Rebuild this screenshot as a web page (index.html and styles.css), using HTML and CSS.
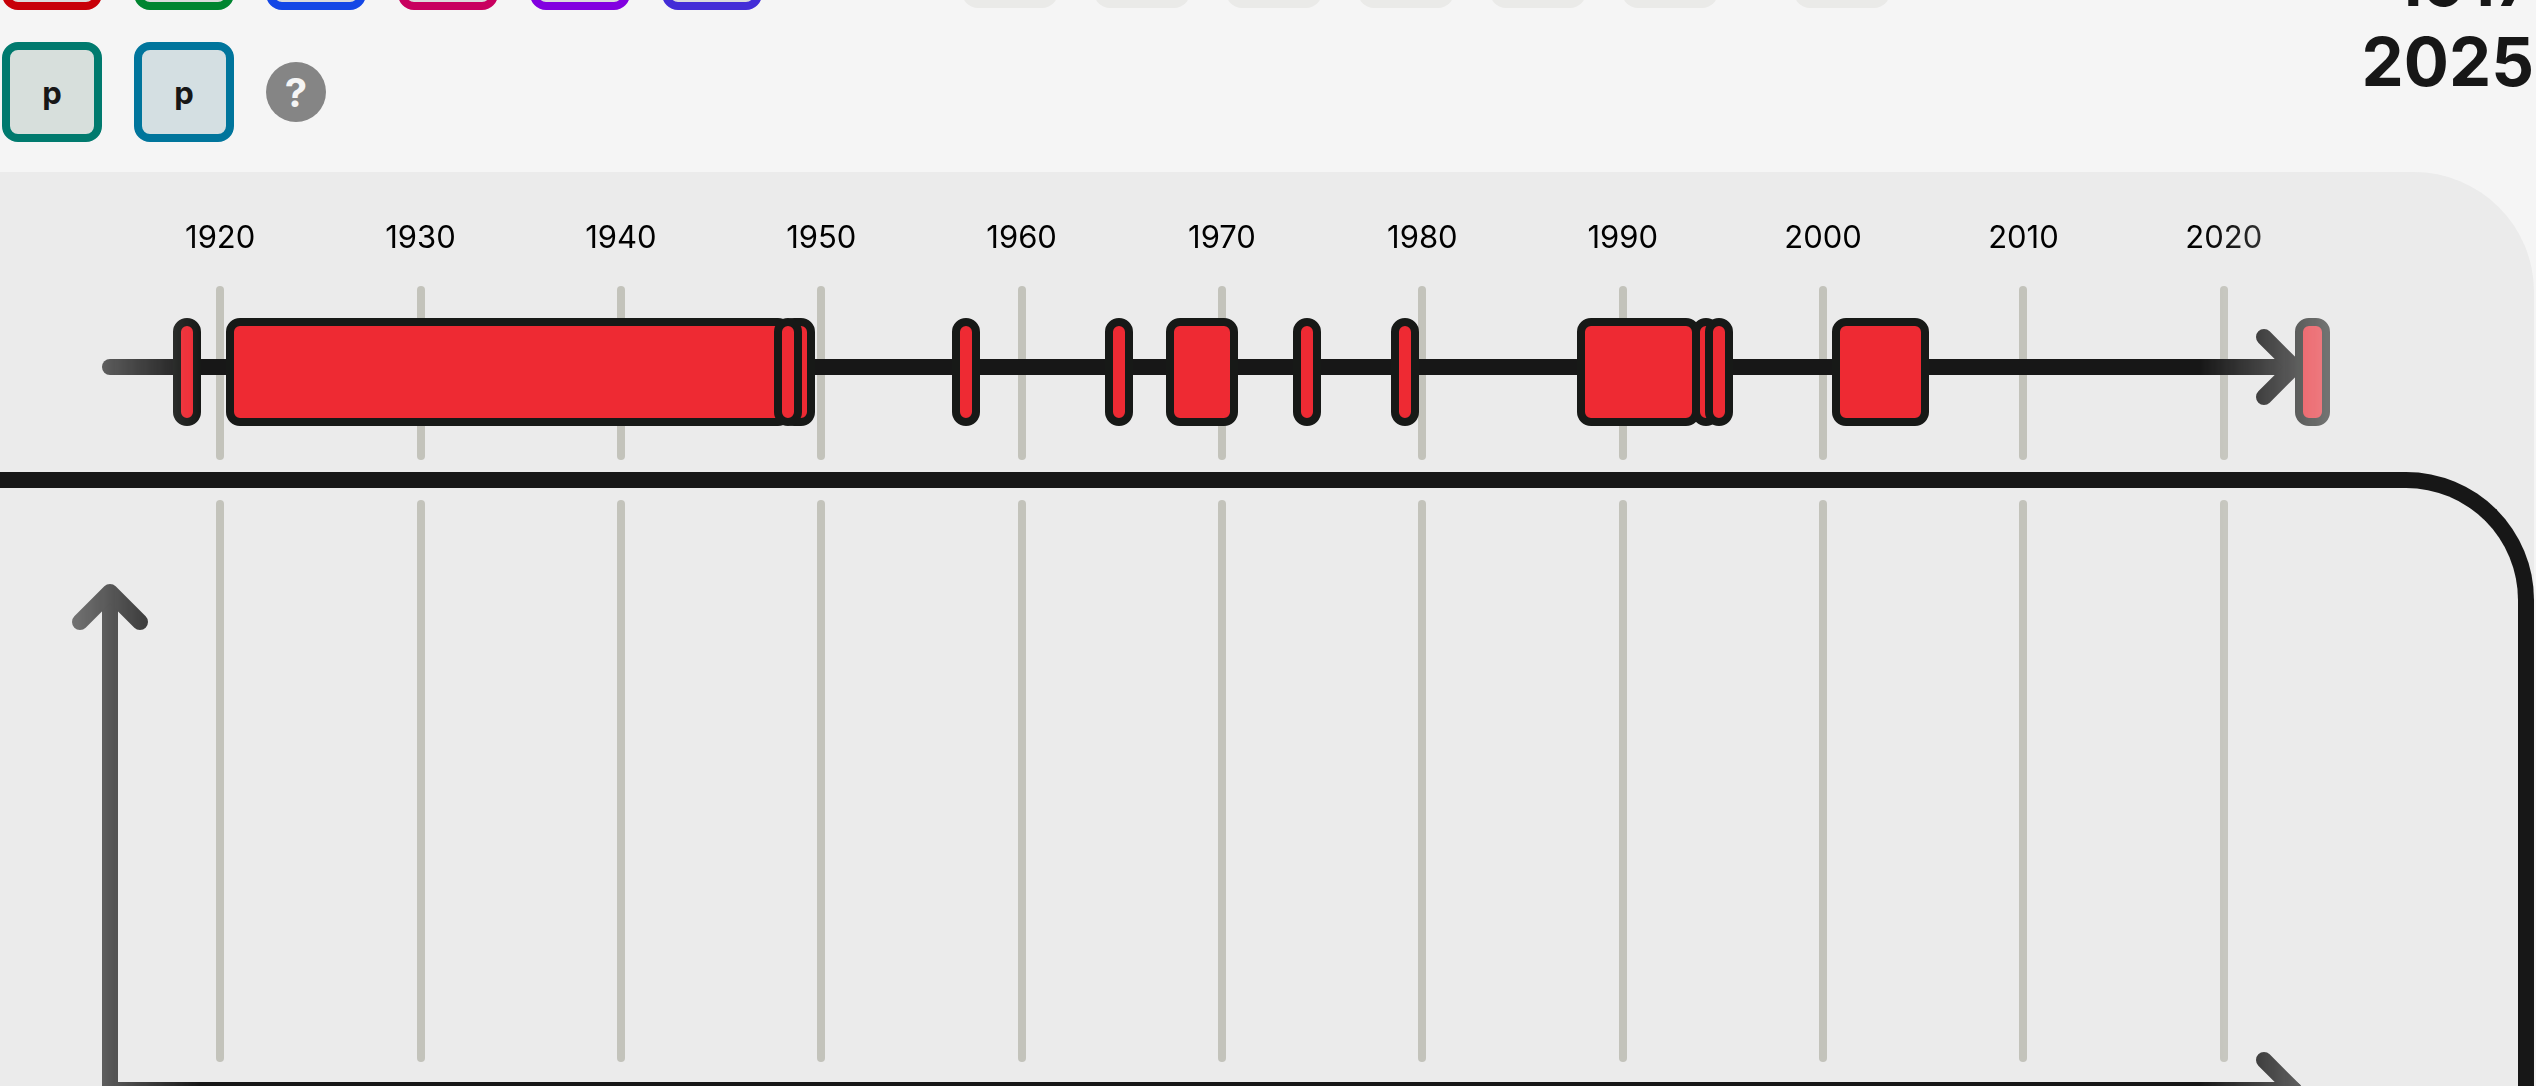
FILE: index.html
```html
<!DOCTYPE html>
<html lang="en">
<head>
<meta charset="utf-8">
<title>Timeline 1917–2025</title>
<link rel="stylesheet" href="styles.css">
</head>
<body>
<div class="app">
  <header class="toolbar">
    <div class="keys">
      <button class="key red" aria-label="Red"></button>
      <button class="key green" aria-label="Green"></button>
      <button class="key blue" aria-label="Blue"></button>
      <button class="key pink" aria-label="Pink"></button>
      <button class="key purple" aria-label="Purple"></button>
      <button class="key indigo" aria-label="Indigo"></button>
      <button class="key teal">p</button>
      <button class="key cyan">p</button>
      <button class="help">?</button>
    </div>
    <div class="slots">
      <button class="slot" aria-label="Slot 1"></button>
      <button class="slot" aria-label="Slot 2"></button>
      <button class="slot" aria-label="Slot 3"></button>
      <button class="slot" aria-label="Slot 4"></button>
      <button class="slot" aria-label="Slot 5"></button>
      <button class="slot" aria-label="Slot 6"></button>
      <button class="slot apart" aria-label="Slot 7"></button>
    </div>
    <div class="range"><div>1917</div><div>2025</div></div>
  </header>

  <main class="panel">
    <section class="plot events">
      <div class="years">
        <span>1920</span><span>1930</span><span>1940</span><span>1950</span><span>1960</span><span>1970</span><span>1980</span><span>1990</span><span>2000</span><span>2010</span><span>2020</span>
      </div>
      <div class="track">
        <div class="ticks"><i></i><i></i><i></i><i></i><i></i><i></i><i></i><i></i><i></i><i></i><i></i></div>
        <div class="axis">
          <svg class="head" width="46" height="76" viewBox="0 0 46 76"><path d="M8 8 38 38 8 68"/></svg>
        </div>
        <div class="bar" style="left:2.4%"></div>
        <div class="bar" style="left:4.81%;width:25.68%"></div>
        <div class="bar" style="left:29.95%;width:1.59%"></div>
        <div class="bar" style="left:29.67%"></div>
        <div class="bar" style="left:37.75%"></div>
        <div class="bar" style="left:44.69%"></div>
        <div class="bar" style="left:47.46%;width:3.27%"></div>
        <div class="bar" style="left:53.22%"></div>
        <div class="bar" style="left:57.69%"></div>
        <div class="bar" style="left:66.11%;width:5.58%"></div>
        <div class="bar" style="left:71.32%"></div>
        <div class="bar" style="left:71.93%"></div>
        <div class="bar" style="left:77.68%;width:4.4%"></div>
        <div class="bar" style="left:98.68%;width:1.59%"></div>
      </div>
    </section>

    <section class="frame">
      <div class="plot chart">
        <div class="track">
          <div class="ticks"><i></i><i></i><i></i><i></i><i></i><i></i><i></i><i></i><i></i><i></i><i></i></div>
          <div class="shaft"></div>
          <svg class="up" width="76" height="46" viewBox="0 0 76 46"><path d="M8 38 38 8 68 38"/></svg>
          <div class="axis">
            <svg class="head" width="46" height="76" viewBox="0 0 46 76"><path d="M8 8 38 38 8 68"/></svg>
          </div>
        </div>
      </div>
    </section>
  </main>
</div>
</body>
</html>
```
FILE: styles.css
```css
* { box-sizing: border-box; }

body {
  margin: 0;
  background: #f5f5f5;
  color: #171717;
  font-family: Inter, "Liberation Sans", sans-serif;
}

button {
  padding: 0;
  border: 0;
  color: inherit;
  font: inherit;
  font-weight: 700;
}

.app {
  height: 100vh;
  overflow: hidden;
}

/* Toolbar: the first row of keys is scrolled mostly out of view */
.toolbar {
  display: flex;
  align-items: flex-start;
  margin-top: -90px;
  padding: 0 2px 30px;
}

.keys {
  display: grid;
  grid-template-columns: repeat(6, 100px);
  gap: 32px;
  align-items: center;
}

.key {
  height: 100px;
  border: 8px solid;
  border-radius: 16px;
  background: #dcdcdc;
  font-size: 31px;
}

.red { border-color: #c80008; }
.green { border-color: #008530; }
.blue { border-color: #1447e6; }
.pink { border-color: #c8005f; }
.purple { border-color: #8200e0; }
.indigo { border-color: #432dd7; }
.teal { border-color: #007a6e; background: #d7dfdc; }
.cyan { border-color: #00759c; background: #d4dfe2; }
.teal, .cyan { color: #171717; }

.help {
  width: 60px;
  height: 60px;
  border-radius: 50%;
  background: #858585;
  color: #f5f5f5;
  font-size: 40px;
}

.slots {
  display: flex;
  gap: 36px;
  margin-left: 200px;
}

.slot {
  width: 96px;
  height: 98px;
  border-radius: 16px;
  background: #eaeae8;
}

.apart { margin-left: 40px; }

.range {
  margin: 32px 0 0 auto;
  font-size: 67px;
  font-weight: 700;
  line-height: 80px;
  text-align: right;
}

/* Panel with the two plots */
.panel {
  margin-right: 2px;
  border-top-right-radius: 120px;
  background: #ebebeb;
}

.plot {
  --end: 210px;
  padding: 45px var(--end) 12px 120px;
  mask-image: linear-gradient(to right, rgb(0 0 0 / 33%), #000 200px, #000 calc(100% - var(--end) - 124px), transparent calc(100% - var(--end) + 176px));
}

.years {
  display: grid;
  grid-template-columns: repeat(11, 1fr);
  margin-bottom: 29px;
  color: #000;
  font-size: 31px;
  line-height: 40px;
  text-align: center;
}

.track { position: relative; }

.ticks {
  display: grid;
  grid-template-columns: repeat(11, 1fr);
  justify-items: center;
  height: 174px;
}

.ticks i {
  width: 8px;
  border-radius: 4px;
  background: #c3c3bb;
}

.axis {
  position: absolute;
  top: 73px;
  right: 22px;
  left: -18px;
  height: 16px;
  border-radius: 8px;
  background: #171717;
}

.head {
  position: absolute;
  top: -30px;
  right: 0;
}

svg path {
  fill: none;
  stroke: #171717;
  stroke-width: 16px;
  stroke-linecap: round;
  stroke-linejoin: round;
}

.bar {
  position: absolute;
  top: 32px;
  width: 28px;
  height: 108px;
  border: 8px solid #171917;
  border-radius: 14px;
  background: #ee2a33;
}

.frame {
  border: solid #171717;
  border-width: 16px 16px 0 0;
  border-top-right-radius: 128px;
}

.chart {
  --end: 194px;
  padding-top: 12px;
  padding-bottom: 48px;
}

.chart .track { padding-bottom: 36px; }
.chart .ticks { height: 562px; }

.chart .axis {
  top: auto;
  bottom: 0;
}

.shaft {
  position: absolute;
  top: 92px;
  bottom: 0;
  left: -18px;
  width: 16px;
  border-radius: 8px;
  background: #171717;
}

.up {
  position: absolute;
  top: 84px;
  left: -48px;
}
```
